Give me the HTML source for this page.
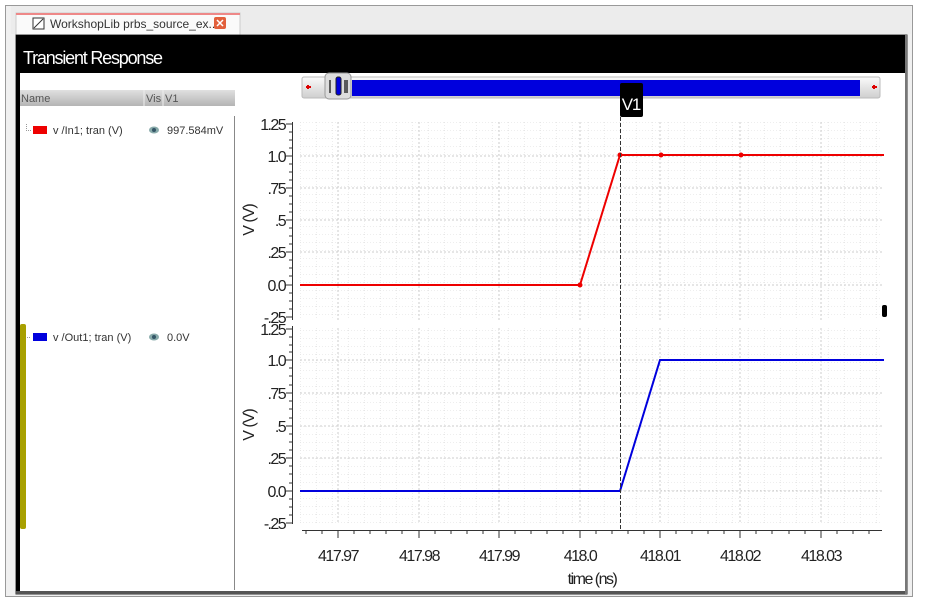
<!DOCTYPE html>
<html><head><meta charset="utf-8"><style>
body{margin:0;width:938px;height:603px;background:#fff;overflow:hidden;font-family:"Liberation Sans",sans-serif;}
</style></head><body>
<svg width="938" height="603" xmlns="http://www.w3.org/2000/svg" font-family="Liberation Sans, sans-serif">
<defs>
<pattern id="g" x="300" y="122" width="16" height="8" patternUnits="userSpaceOnUse">
<path d="M0 0V8" stroke="#ddd" stroke-width="1" stroke-dasharray="1 2"/>
<path d="M0 0H16" stroke="#ddd" stroke-width="1" stroke-dasharray="1 2"/>
</pattern>
<linearGradient id="hd" x1="0" y1="0" x2="0" y2="1"><stop offset="0" stop-color="#e0e0e0"/><stop offset="1" stop-color="#b4b4b4"/></linearGradient>
<linearGradient id="sb" x1="0" y1="0" x2="0" y2="1"><stop offset="0" stop-color="#fafafa"/><stop offset="1" stop-color="#cfcfcf"/></linearGradient>
</defs>
<rect x="0" y="0" width="938" height="603" fill="#fff"/>
<rect x="5.5" y="5.5" width="907" height="591" fill="#f0f0f0" stroke="#999"/>
<rect x="11" y="6" width="900" height="28" fill="#ececec"/>
<rect x="16" y="13" width="224" height="22" fill="#fafafa" stroke="#ccc"/>
<rect x="16" y="13" width="224" height="2" fill="#e88"/>
<rect x="33" y="18" width="11" height="11" fill="#fff" stroke="#333"/>
<path d="M34 28L43 19" stroke="#333"/>
<text x="50" y="28" font-size="12" fill="#333">WorkshopLib prbs_source_ex...</text>
<rect x="214" y="17" width="12" height="12" rx="2" fill="#e2603c"/>
<path d="M217 20l6 6M223 20l-6 6" stroke="#fff" stroke-width="1.5"/>
<rect x="16" y="35" width="891" height="559" fill="#fff" stroke="#333"/>
<rect x="16" y="35" width="890" height="38" fill="#000"/>
<rect x="16" y="35" width="4" height="559" fill="#000"/>
<rect x="16" y="591" width="891" height="3" fill="#555"/>
<rect x="905" y="35" width="2" height="559" fill="#777"/>
<text x="23" y="64" font-size="18" fill="#fff" letter-spacing="-1.2">Transient Response</text>
<rect x="20" y="90" width="215" height="16" fill="url(#hd)"/>
<path d="M144 90V106M163 90V106" stroke="#eee"/>
<text x="21" y="102" font-size="11" fill="#555">Name</text>
<text x="146" y="102" font-size="11" fill="#555">Vis</text>
<text x="165" y="102" font-size="11" fill="#555">V1</text>
<path d="M234.5 116V590" stroke="#888"/>
<path d="M26.5 124V130.5H31" stroke="#999" stroke-width="1" stroke-dasharray="1 1" fill="none"/>
<rect x="33" y="126" width="14" height="8" fill="#e00"/>
<text x="53" y="134" font-size="11" fill="#333">v /In1; tran (V)</text>
<ellipse cx="154" cy="130" rx="5" ry="3.5" fill="#8aa"/><circle cx="154" cy="130" r="2" fill="#356"/>
<text x="167" y="134" font-size="11" fill="#333">997.584mV</text>
<rect x="20" y="324" width="6" height="205" rx="2" fill="#a8a000"/>
<path d="M27 337.5H31" stroke="#999" stroke-dasharray="1 1"/>
<rect x="33" y="333" width="14" height="8" fill="#00d"/>
<text x="53" y="341" font-size="11" fill="#333">v /Out1; tran (V)</text>
<ellipse cx="154" cy="337" rx="5" ry="3.5" fill="#8aa"/><circle cx="154" cy="337" r="2" fill="#356"/>
<text x="167" y="341" font-size="11" fill="#333">0.0V</text>
<rect x="302" y="77" width="578" height="21" rx="2" fill="url(#sb)" stroke="#bbb"/>
<rect x="352" y="80" width="508" height="16" fill="#0000dd"/>
<path d="M306 87h5M308 85v4" stroke="#d00" stroke-width="2"/>
<path d="M872 87h5M874 85v4" stroke="#d00" stroke-width="2"/>
<rect x="325" y="73" width="26" height="26" rx="4" fill="#ddd" stroke="#999"/>
<rect x="336" y="77" width="5" height="18" rx="2" fill="#00d" stroke="#222"/>
<path d="M330 80v13M345 80v13M347 80v13" stroke="#222" stroke-width="1.4"/>
<rect x="300" y="122" width="582" height="198" fill="url(#g)"/>
<rect x="300" y="328" width="582" height="196" fill="url(#g)"/>
<g stroke="#ccc" stroke-dasharray="2 2">
<path d="M338 122V320M419 122V320M499 122V320M580 122V320M660 122V320M740 122V320M821 122V320"/>
<path d="M338 328V524M419 328V524M499 328V524M580 328V524M660 328V524M740 328V524M821 328V524"/>
<path d="M300 156H882M300 188H882M300 220H882M300 252H882M300 285H882"/>
<path d="M300 360H882M300 393H882M300 426H882M300 458H882M300 491H882"/>
</g>
<g stroke="#333">
<path d="M292.5 122V320M292.5 326V524"/>
<path d="M286 124H292M286 156H292M286 188H292M286 220H292M286 252H292M286 285H292M286 317H292"/>
<path d="M289 132H292M289 140H292M289 148H292M289 164H292M289 172H292M289 180H292M289 196H292M289 204H292M289 212H292M289 228H292M289 236H292M289 244H292M289 260H292M289 268H292M289 276H292M289 293H292M289 301H292M289 309H292"/>
<path d="M286 329H292M286 360H292M286 393H292M286 426H292M286 458H292M286 491H292M286 523H292"/>
<path d="M289 337H292M289 345H292M289 352H292M289 368H292M289 376H292M289 385H292M289 401H292M289 409H292M289 418H292M289 434H292M289 442H292M289 450H292M289 466H292M289 474H292M289 483H292M289 499H292M289 507H292M289 515H292"/>
<path d="M302 530.5H882"/>
<path d="M338 530V538M419 530V538M499 530V538M580 530V538M660 530V538M740 530V538M821 530V538"/>
<path d="M306 530V534M322 530V534M354 530V534M370 530V534M386 530V534M402 530V534M435 530V534M451 530V534M467 530V534M483 530V534M515 530V534M531 530V534M547 530V534M563 530V534M596 530V534M612 530V534M628 530V534M644 530V534M676 530V534M692 530V534M708 530V534M724 530V534M756 530V534M772 530V534M789 530V534M805 530V534M837 530V534M853 530V534M869 530V534"/>
</g>
<g font-size="16" fill="#222" text-anchor="end" letter-spacing="-1.6">
<text x="285" y="130">1.25</text><text x="285" y="162">1.0</text><text x="285" y="194">.75</text><text x="285" y="226">.5</text><text x="285" y="258">.25</text><text x="285" y="291">0.0</text><text x="285" y="323">-.25</text>
<text x="285" y="335">1.25</text><text x="285" y="366">1.0</text><text x="285" y="399">.75</text><text x="285" y="432">.5</text><text x="285" y="464">.25</text><text x="285" y="497">0.0</text><text x="285" y="529">-.25</text>
</g>
<text transform="translate(254,220) rotate(-90)" font-size="16" fill="#222" text-anchor="middle" letter-spacing="-1">V (V)</text>
<text transform="translate(254,425) rotate(-90)" font-size="16" fill="#222" text-anchor="middle" letter-spacing="-1">V (V)</text>
<g font-size="16" fill="#222" text-anchor="middle" letter-spacing="-1.5">
<text x="338" y="561">417.97</text><text x="419" y="561">417.98</text><text x="499" y="561">417.99</text><text x="580" y="561">418.0</text><text x="660" y="561">418.01</text><text x="740" y="561">418.02</text><text x="821" y="561">418.03</text>
<text x="592" y="584">time (ns)</text>
</g>
<path d="M300 285H580L620 155H884" fill="none" stroke="#e00" stroke-width="2"/>
<g fill="#e00"><circle cx="580" cy="285" r="2.5"/><circle cx="620" cy="155" r="2.5"/><circle cx="661" cy="155" r="2.5"/><circle cx="741" cy="155" r="2.5"/></g>
<path d="M300 491H620L660 360H884" fill="none" stroke="#00d" stroke-width="2"/>
<path d="M620.5 117V530" stroke="#333" stroke-dasharray="4 2"/>
<rect x="620" y="83" width="23" height="34" rx="2" fill="#000"/>
<text x="631" y="110" font-size="17" fill="#fff" text-anchor="middle" letter-spacing="-1.2">V1</text>
<rect x="882" y="305" width="5" height="12" rx="2" fill="#000"/>
</svg>
</body></html>
